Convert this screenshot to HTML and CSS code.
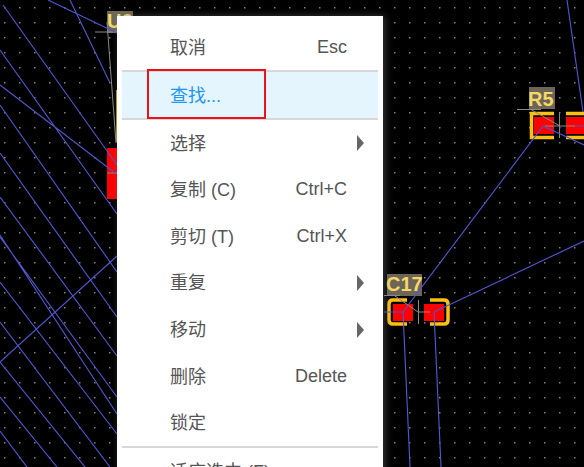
FILE: index.html
```html
<!DOCTYPE html>
<html lang="zh-CN">
<head>
    <meta charset="UTF-8">
    <meta name="viewport" content="width=device-width, initial-scale=1.0">
    <title>PCB 右键菜单</title>
    <link rel="stylesheet" href="styles.css">
</head>
<body>
    <!-- board canvas -->
    <svg class="board" width="584" height="467" viewBox="0 0 584 467">
        <defs>
            <pattern id="grid" x="4" y="7" width="15" height="15" patternUnits="userSpaceOnUse">
                <rect x="0" y="0" width="1.5" height="1.5" fill="#808080"/>
            </pattern>
        </defs>
        <rect class="board-bg" width="584" height="467"/>
        <rect width="584" height="467" fill="url(#grid)"/>

        <!-- U part, mostly behind the menu -->
        <rect class="label-box" x="107" y="11" width="26" height="22"/>
        <text class="label" x="107" y="28">U6</text>
        <path class="pad-outline" d="M118 90V142"/>
        <rect class="pad" x="107" y="148" width="11" height="51"/>

        <!-- R5 -->
        <rect class="label-box" x="529" y="87" width="26" height="22"/>
        <text class="label" x="528" y="106">R5</text>
        <path class="pad-outline" d="M554 113.500H531.500V137.500H554M584 113.500H566M584 137.500H566"/>
        <rect class="pad" x="534" y="117" width="20" height="17"/>
        <rect class="pad" x="566" y="117" width="18" height="17"/>

        <!-- C17 -->
        <rect class="label-box" x="387" y="274" width="35" height="22"/>
        <text class="label" x="386" y="291">C17</text>
        <path class="pad-outline" d="M407 300H393Q389 300 389 304V320Q389 324 393 324H407"/>
        <path class="pad-outline" d="M430 300H444Q448 300 448 304V320Q448 324 444 324H430"/>
        <rect class="pad" x="393" y="304" width="20" height="17"/>
        <rect class="pad" x="424" y="304" width="20" height="17"/>

        <!-- silk and centre lines -->
        <path class="guide" d="M95 32H117M107 22L116 143M107 173H117M517 109.500H541M530 109L560 126M545 126H575M559.500 112V138M384 295.500H400M395 296L418 312M418 312H430M418.500 300V324"/>

        <!-- ratsnest -->
        <path class="net" d="M48 0L117 33M70 0L110 83M3 5L117 165M0 50L117 214M0 85L115 173M0 105L117 272M0 153L117 317M0 197L117 356M0 237L117 397M0 235L117 414M0 282L117 434M0 322L110 467M0 362L85 467M0 397L57 467M0 431L27 467M0 362L117 256"/>
        <path class="net" d="M567 0L583 112M543 126L403 312M543 126L584 145M575 126H584M384 312H403M403 312L410 467M434 312L441 467M434 312L584 241"/>
    </svg>

    <ul class="menu">
        <li class="menu-item first"><span>取消</span><span>Esc</span></li>
        <li class="menu-line"></li>
        <li class="menu-item active"><span>查找...</span></li>
        <li class="menu-line"></li>
        <li class="menu-item sub"><span>选择</span><i class="arrow"></i></li>
        <li class="menu-item"><span>复制 (C)</span><span>Ctrl+C</span></li>
        <li class="menu-item"><span>剪切 (T)</span><span>Ctrl+X</span></li>
        <li class="menu-item sub"><span>重复</span><i class="arrow"></i></li>
        <li class="menu-item sub"><span>移动</span><i class="arrow"></i></li>
        <li class="menu-item"><span>删除</span><span>Delete</span></li>
        <li class="menu-item"><span>锁定</span></li>
        <li class="menu-line"></li>
        <li class="menu-item"><span>适应选中 (F)</span></li>
    </ul>

    <div class="mark"></div>
</body>
</html>
```

FILE: styles.css
```css
body {
    font-family: "Liberation Sans", Arial, "Noto Sans CJK SC", sans-serif;
    margin: 0;
    padding: 0;
    width: 584px;
    height: 467px;
    overflow: hidden;
    position: relative;
    background-color: #000;
}

.board {
    display: block;
}

.board-bg {
    fill: #000;
}

.label-box {
    fill: #6b6658;
}

.label {
    fill: #f6d768;
    font-size: 20px;
    font-weight: bold;
}

.pad {
    fill: #f00;
}

.pad-outline {
    fill: none;
    stroke: #fcc010;
    stroke-width: 3.5;
}

.guide {
    fill: none;
    stroke: #8a8a8a;
    stroke-width: 1;
}

.net {
    fill: none;
    stroke: #5055d0;
    stroke-width: 1.15;
}

.menu {
    position: absolute;
    left: 117px;
    top: 16px;
    width: 256px;
    margin: 0;
    padding: 8px 5px 0;
    list-style: none;
    background-color: #fff;
    color: #555;
    font-size: 18px;
    box-shadow: 2px 0 8px rgba(130, 130, 130, 0.45);
}

.menu-item {
    display: flex;
    justify-content: space-between;
    align-items: center;
    height: 46.57px;
    padding: 0 31px 0 48px;
}

.menu-item span:first-child {
    margin-bottom: 3px;
}

.menu-item.first {
    height: 46px;
}

.menu-line {
    height: 2px;
    background-color: #d8d8d8;
}

.menu-item.active {
    height: 46px;
    background-color: #e4f5fe;
    color: #1e96f5;
}

.menu-item.sub {
    padding-right: 14px;
}

.arrow {
    width: 0;
    height: 0;
    border-left: 7px solid #666;
    border-top: 8px solid transparent;
    border-bottom: 8px solid transparent;
}

.mark {
    position: absolute;
    left: 147px;
    top: 69px;
    width: 115px;
    height: 46px;
    border: 2px solid #f01018;
}
```
